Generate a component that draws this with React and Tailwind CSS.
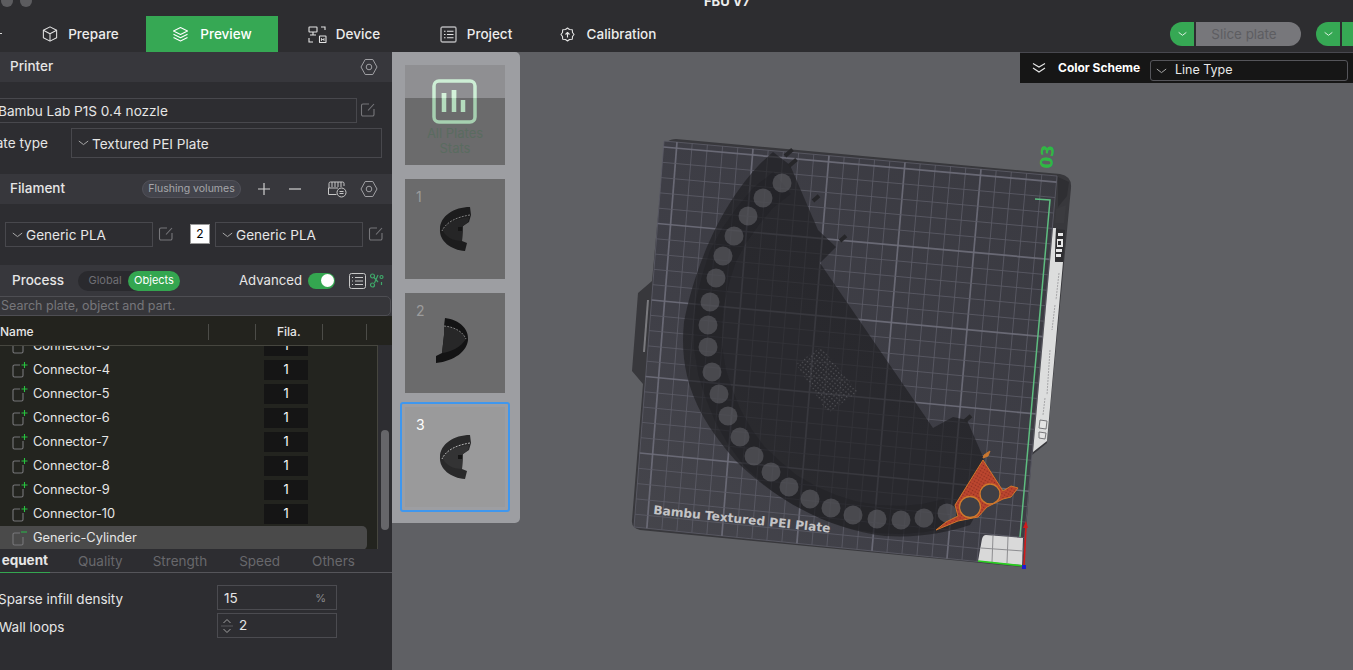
import React from "react";

const FONT = "font-['Inter','Noto_Sans',sans-serif]";

const Gear = ({ className = "" }) => (
  <svg width="18" height="18" viewBox="0 0 18 18" fill="none" stroke="#a0a0a4" strokeWidth="1" className={className}>
    <path d="M5.200 1.500h7.600L17 9l-4.200 7.500H5.200L1 9z" strokeLinejoin="round" />
    <circle cx="9" cy="9" r="2.800" />
  </svg>
);

const Edit = ({ className = "" }) => (
  <svg width="16" height="16" viewBox="0 0 16 16" fill="none" stroke="#77777b" strokeWidth="1.100" className={className}>
    <path d="M9 2H3a1.500 1.500 0 0 0-1.500 1.500v9A1.500 1.500 0 0 0 3 14h9.500a1.500 1.500 0 0 0 1.500-1.500V7" />
    <path d="M8 8.500 14 2" />
  </svg>
);

const Chevron = ({ color = "#a8a8a8", w = 11 }) => (
  <svg width={w} height="6" viewBox="0 0 11 6" fill="none" stroke={color} strokeWidth="1" className="shrink-0">
    <path d="M.8 1 5.500 4.600 10.200 1" />
  </svg>
);

const PartIcon = ({ minus }) => (
  <svg width="16" height="18" viewBox="0 0 16 18" fill="none" className="shrink-0">
    <path d="M8 4H2.500A1.500 1.500 0 0 0 1 5.500v9A1.500 1.500 0 0 0 2.500 16h7a1.500 1.500 0 0 0 1.500-1.500V8" stroke="#77777a" strokeWidth="1.100" />
    {minus ? (
      <path d="M9 3h6" stroke="#2ea84a" strokeWidth="1.200" />
    ) : (
      <path d="M9.500 4h6M12.500 1v6" stroke="#27c33f" strokeWidth="1.100" />
    )}
  </svg>
);

const Tab = ({ icon, label, active, gap }) => (
  <div className={`w-[132px] h-9 flex items-center justify-center text-[13.5px] font-medium ${gap} ${active ? "bg-[#36a854] text-white" : "text-[#ececec]"}`}>
    {icon}
    <span>{label}</span>
  </div>
);

const IconCube = (
  <svg width="18" height="18" viewBox="0 0 19 19" fill="none" stroke="#e4e4e4" strokeWidth="1.100" strokeLinejoin="round">
    <path d="M9.500 2 16.500 5.600v7.800L9.500 17 2.500 13.400V5.600z" />
    <path d="M2.500 5.600 9.500 9.200 16.500 5.600M9.500 9.200V17" />
  </svg>
);
const IconLayers = (
  <svg width="17" height="17" viewBox="0 0 17 17" fill="none" stroke="#ffffff" strokeWidth="1.100" strokeLinejoin="round">
    <path d="M8.500 1.500 15.500 5 8.500 8.500 1.500 5z" />
    <path d="M1.500 8.300 8.500 11.800 15.500 8.300M1.500 11.500 8.500 15 15.500 11.500" />
  </svg>
);
const IconDevice = (
  <svg width="19" height="17" viewBox="0 0 19 17" fill="none" stroke="#e4e4e4" strokeWidth="1.100">
    <rect x="1" y="1" width="8" height="5" rx=".5" />
    <path d="M5 6v3M2 9h6M13 1h4v3M1 12v4h4" />
    <rect x="11.500" y="10" width="6.500" height="6.500" rx=".5" />
    <path d="M13.500 12v3M16 12v3M13.500 13.500H16" strokeWidth=".8" />
  </svg>
);
const IconProject = (
  <svg width="17" height="17" viewBox="0 0 17 17" fill="none" stroke="#b4b4b6" strokeWidth="1.400">
    <rect x="1" y="1" width="15" height="15" rx="1.500" />
    <path d="M4 5.200h1.500M7 5.200h6.500M4 8.500h1.500M7 8.500h6.500M4 11.800h1.500M7 11.800h6.500" stroke="#e4e4e4" strokeWidth="1.100" />
  </svg>
);
const IconCalib = (
  <svg width="15" height="15" viewBox="0 0 15 15" fill="none" stroke="#e4e4e4" strokeWidth="1.100" strokeLinejoin="round">
    <path d="M7.500 1 9.500 2.500 12.300 2.700 12.500 5.500 14 7.500 12.500 9.500 12.300 12.300 9.500 12.500 7.500 14 5.500 12.500 2.700 12.300 2.500 9.500 1 7.500 2.500 5.500 2.700 2.700 5.500 2.500z" />
    <path d="M7.500 10.500V5.500M5.500 7.500l2-2 2 2" />
  </svg>
);

const Head = ({ children, className = "" }) => (
  <div className={`bg-[#37373c] flex items-center ${className}`}>{children}</div>
);

const rows = ["Connector-3", "Connector-4", "Connector-5", "Connector-6", "Connector-7", "Connector-8", "Connector-9", "Connector-10"];

function Sidebar() {
  return (
    <aside className="w-[392px] shrink-0 h-[618px] bg-[#2d2d31] overflow-hidden text-[#e6e6e6]">
      <Head className="h-[30px] pl-[10px] pr-[14px] justify-between text-[13.5px] font-medium">
        <span className="mb-[1px]">Printer</span>
        <Gear />
      </Head>
      <div className="h-[92px] pt-[16px]">
        <div className="flex items-center h-[24px]">
          <div className="ml-[-10px] w-[367px] h-[25px] border border-[#48484d] flex items-center pl-[7px] pt-[2px] text-[13.6px] whitespace-nowrap">Bambu Lab P1S 0.4 nozzle</div>
          <Edit className="ml-[3px]" />
        </div>
        <div className="flex items-center mt-[6px] h-[30px]">
          <div className="w-[71px] shrink-0 flex justify-end pr-[23px] text-[13.6px] whitespace-nowrap">Plate type</div>
          <div className="w-[311px] h-[30px] border border-[#48484d] flex items-center pl-[6px] gap-[3px] text-[13.6px]">
            <Chevron />
            <span className="pt-[2px]">Textured PEI Plate</span>
          </div>
        </div>
      </div>
      <Head className="h-[30px] pl-[10px] pr-[14px] text-[13.5px] font-medium">
        <span className="w-[57px] mb-[1px]">Filament</span>
        <span className="ml-[75px] w-[99px] h-[18px] rounded-full bg-[#43444c] border border-[#515159] text-[10.5px] font-normal text-[#a6a6aa] flex items-center justify-center whitespace-nowrap">Flushing volumes</span>
        <svg width="14" height="14" viewBox="0 0 14 14" stroke="#d0d0d0" strokeWidth="1.200" className="ml-[16px]"><path d="M1 7h12M7 1v12" /></svg>
        <svg width="14" height="14" viewBox="0 0 14 14" stroke="#d0d0d0" strokeWidth="1.200" className="ml-[17px]"><path d="M1 7h12" /></svg>
        <svg width="20" height="18" viewBox="0 0 20 18" fill="none" stroke="#c6c6c6" strokeWidth="1" className="ml-[25px]">
          <path d="M2 8V3.500a1.500 1.500 0 0 1 1.500-1.500h12A1.500 1.500 0 0 1 17 3.500V6M5 2v5M8 2v5M11 2v5M14 2v5M1.500 8H11M1.500 8v6.500h8" />
          <circle cx="14.500" cy="12.500" r="4.500" />
          <path d="M12.500 11.500h4M12.500 13.500h4" />
        </svg>
        <Gear className="ml-[13px]" />
      </Head>
      <div className="h-[61px] pt-[18px] flex items-start text-[13.6px]">
        <div className="ml-[5px] w-[148px] h-[25px] border border-[#48484d] flex items-center pl-[6px] gap-[3px]">
          <Chevron />
          <span className="pt-[1px]">Generic PLA</span>
        </div>
        <Edit className="ml-[5px] mt-[4px]" />
        <div className="ml-[16px] mt-[2px] w-[20px] h-[20px] bg-white border border-[#999] text-black text-[12px] flex items-center justify-center">2</div>
        <div className="ml-[5px] w-[148px] h-[25px] border border-[#48484d] flex items-center pl-[6px] gap-[3px]">
          <Chevron />
          <span className="pt-[1px]">Generic PLA</span>
        </div>
        <Edit className="ml-[5px] mt-[4px]" />
      </div>
      <Head className="h-[31px] pl-[12px] text-[13.5px] font-medium">
        <span className="w-[52px]">Process</span>
        <div className="ml-[14px] w-[102px] h-[20px] rounded-full bg-[#2a2a2e] flex items-center text-[11px] font-normal">
          <span className="w-[50px] pl-[4px] text-center text-[#6f6f74]">Global</span>
          <span className="w-[52px] h-[20px] rounded-full bg-[#34a650] text-white flex items-center justify-center">Objects</span>
        </div>
        <span className="ml-[59px] w-[63px] text-[13.2px] font-normal whitespace-nowrap">Advanced</span>
        <div className="ml-[6px] w-[27px] h-[16px] rounded-full bg-[#34a650] flex items-center justify-end pr-[1px]">
          <div className="w-[13px] h-[13px] rounded-full bg-white" />
        </div>
        <svg width="17" height="16" viewBox="0 0 17 16" fill="none" stroke="#c8c8c8" strokeWidth="1" className="ml-[14px]">
          <rect x=".5" y=".5" width="16" height="15" rx="2" />
          <path d="M3 4.500h1M6 4.500h8M3 8h1M6 8h8M3 11.500h1M6 11.500h8" />
        </svg>
        <svg width="15" height="15" viewBox="0 0 15 15" fill="none" stroke="#3fa86a" strokeWidth="1.200" className="ml-[3px]">
          <circle cx="3.500" cy="3" r="2" />
          <circle cx="3.500" cy="12" r="2" />
          <circle cx="12.500" cy="4" r="1.500" />
          <path d="M5 4.500 9 9M9 2 5.500 10M12.500 9v3" />
        </svg>
      </Head>
      <div className="bg-[#37373c] h-[20px]">
        <div className="ml-[-6px] w-[397px] h-[20px] rounded-[5px] border border-[#4e4e53] bg-[#36363a] flex items-center pl-[6px] pt-[1px] text-[12.5px] text-[#77777b] overflow-hidden">Search plate, object and part.</div>
      </div>
      <div className="h-[29px] pt-[2px] bg-[#23231e] flex items-center text-[12px] font-medium">
        <span className="w-[33px]">Name</span>
        <div className="ml-[175px] w-px h-[16px] bg-[#4c4c48]" />
        <div className="ml-[46px] w-px h-[16px] bg-[#4c4c48]" />
        <span className="ml-[21px] w-[25px] text-[#e6e6e6]">Fila.</span>
        <div className="ml-[20px] w-px h-[16px] bg-[#4c4c48]" />
        <div className="ml-[43px] w-px h-[16px] bg-[#4c4c48]" />
      </div>
      <div className="flex h-[204px]">
        <div className="w-[378px] h-[204px] bg-[#23241f] border-r border-t border-[#46463f] overflow-hidden">
          <div className="mt-[-12px]">
            {rows.map((r) => (
              <div key={r} className="h-[24px] flex items-center pl-[12px] text-[12.8px]">
                <PartIcon />
                <span className="ml-[5px] w-[231px]">{r}</span>
                <div className="w-[44px] h-[20px] bg-[#151515] text-white flex items-center justify-center">1</div>
              </div>
            ))}
            <div className="h-[24px] ml-[-8px] mr-[10px] rounded-[5px] bg-[#4a4a4a] flex items-center pl-[20px] text-[12.8px]">
              <PartIcon minus />
              <span className="ml-[5px]">Generic-Cylinder</span>
            </div>
          </div>
        </div>
        <div className="flex-1 pl-[3px] pt-[85px]">
          <div className="w-[8px] h-[100px] rounded-full bg-[#66666a]" />
        </div>
      </div>
      <div className="h-[24px] flex items-stretch border-b border-[#55555a] text-[13.5px] text-[#68686c]">
        <div className="w-[50px] overflow-hidden border-b-[1.5px] border-[#34a650] mb-[-1px] flex justify-end items-center pr-[2px]">
          <span className="font-bold text-[#e6e6e6]">equent</span>
        </div>
        <span className="ml-[28px] pt-[2px] flex items-center">Quality</span>
        <span className="ml-[30px] pt-[2px] flex items-center">Strength</span>
        <span className="ml-[32px] pt-[2px] flex items-center">Speed</span>
        <span className="ml-[32px] pt-[2px] flex items-center">Others</span>
      </div>
      <div className="pt-[12px] text-[13.5px]">
        <div className="flex items-center h-[25px]">
          <span className="ml-[-2px] w-[219px] pt-[3px]">Sparse infill density</span>
          <div className="w-[120px] h-[25px] border border-[#4b4b50] flex items-center justify-between px-[6px]">
            <span className="pt-[1px]">15</span>
            <span className="text-[#8a8a8e] text-[11px] pr-[4px] pt-[2px]">%</span>
          </div>
        </div>
        <div className="flex items-center h-[25px] mt-[3px]">
          <span className="ml-[-1px] w-[218px] pt-[3px]">Wall loops</span>
          <div className="w-[120px] h-[25px] border border-[#4b4b50] flex items-center pl-[3px] gap-[6px]">
            <svg width="12" height="18" viewBox="0 0 12 18" fill="none" stroke="#a0a0a0" strokeWidth="1">
              <path d="M2.500 6 6 2.500 9.500 6" />
              <path d="M0 9h12" stroke="#58585c" />
              <path d="M2.500 12 6 15.500 9.500 12" />
            </svg>
            <span>2</span>
          </div>
        </div>
      </div>
    </aside>
  );
}

/* ---------- thumbnails ---------- */
const BlobA = ({ fill = "#1c1c1d", face = "#252526", edge = "#8b8b8b" }) => (
  <svg width="100" height="100" viewBox="0 0 100 100" className="absolute left-0 top-0">
    <path d="M65 28 66 36 64 43 58 47 57 62 62 64 60 72C46 71 34 62 35 50 35 37 49 28 65 28Z" fill={fill} />
    <path d="M64 38C50 40 40 44 38 52 41 58 48 62 57 62L58 47 63 43Z" fill={face} />
    <path d="M65 36C52 38 41 43 37 52" stroke={edge} strokeWidth=".9" strokeDasharray="2 1.200" fill="none" />
    <rect x="53" y="48" width="4" height="4" fill="#151515" />
  </svg>
);
const BlobB = () => (
  <svg width="100" height="100" viewBox="0 0 100 100" className="absolute left-0 top-0">
    <path d="M40 25C55 27 64 36 63 47 62 58 50 68 31 70L31 63 37 60 39 42 39 33Z" fill="#131314" />
    <path d="M39 33C50 34 58 39 61 46 56 54 46 59 37 60L39 42Z" fill="#272728" />
    <path d="M39 33C50 34 58 39 61 46" stroke="#8b8b8b" strokeWidth=".9" strokeDasharray="2 1.200" fill="none" />
  </svg>
);

const Thumb = ({ n, active, children }) => (
  <div className={`w-[100px] h-[100px] relative ${active ? "bg-[#9a9a9b]" : "bg-[#6b6b6c]"}`}>
    {children}
    <span className={`absolute left-[11px] top-[7px] text-[14px] ${active ? "text-white" : "text-[#9c9c9c]"}`}>{n}</span>
  </div>
);

function Thumbs() {
  return (
    <div className="absolute left-0 top-0 w-[128px] h-[471px] bg-[#9d9ea2] rounded-r-[5px] pl-[13px] pt-[13px]">
      <div className="w-[100px] h-[100px] relative overflow-hidden bg-[#6b6b6c] flex flex-col items-center">
        <div className="absolute left-0 top-0 w-full h-[33px] bg-[#8f8f92]" />
        <svg width="46" height="46" viewBox="0 0 46 46" fill="none" className="relative mt-[14px] shrink-0">
          <rect x="2" y="2" width="41" height="41" rx="5" stroke="#a6cfb0" strokeWidth="3.500" />
          <path d="M0 0h46v19H0z" fill="#8f8f92" />
          <path d="M2 19V7a5 5 0 0 1 5-5h31a5 5 0 0 1 5 5v12" stroke="#cdeed5" strokeWidth="3.500" />
          <path d="M12 14v19M22 11v22M31 21v12" stroke="#b4dcbd" strokeWidth="4.500" />
          <path d="M12 14v5M22 11v8" stroke="#d4f2da" strokeWidth="4.500" />
        </svg>
        <div className="relative text-[13px] leading-[15px] text-[#5a6b60] text-center mt-[1px] whitespace-nowrap">All Plates<br />Stats</div>
      </div>
      <div className="mt-[14px]">
        <Thumb n="1"><BlobA /></Thumb>
      </div>
      <div className="mt-[14px]">
        <Thumb n="2"><BlobB /></Thumb>
      </div>
      <div className="mt-[9px] ml-[-5px] w-[110px] h-[110px] border-[2px] border-[#3f97ee] rounded-[3px] flex items-center justify-center">
        <Thumb n="3" active><BlobA fill="#29292a" face="#333334" edge="#c6c6c6" /></Thumb>
      </div>
    </div>
  );
}

/* ---------- the 3D bed, drawn in screen coordinates of the canvas ---------- */
const OX = 392, OY = 52;
const Q = { tl: [664, 141], tr: [1057, 176], br: [1022, 566], bl: [634, 527] };
const map = (u, v) => {
  const a = Q.tl[0] + (Q.tr[0] - Q.tl[0]) * u, b = Q.tl[1] + (Q.tr[1] - Q.tl[1]) * u;
  const c = Q.bl[0] + (Q.br[0] - Q.bl[0]) * u, d = Q.bl[1] + (Q.br[1] - Q.bl[1]) * u;
  return [a + (c - a) * v, b + (d - b) * v];
};
const gridLines = [];
const addV = (t, major, k) => {
  const [x1, y1] = map(t, 0), [x2, y2] = map(t, 1);
  gridLines.push({ k, x1, y1, x2, y2, major });
};
const addH = (t, major, k) => {
  const [x1, y1] = map(0, t), [x2, y2] = map(1, t);
  gridLines.push({ k, x1, y1, x2, y2, major });
};
addV(0, false, "v-a");
addV(1, false, "v-b");
addH(0, false, "h-a");
addH(1, false, "h-b");
for (let i = 0; 13 + 15.2 * i < 393; i++) addV((13 + 15.2 * i) / 393, i % 5 === 0, "v" + i);
for (let i = 0; 6 + 15.3 * i < 386; i++) addH((6 + 15.3 * i) / 386, i % 5 === 0, "h" + i);

const holes = [
  [782, 183], [763, 198], [748, 216], [734, 236], [723, 256], [716, 278], [710, 302], [708, 325], [708, 347],
  [712, 372], [719, 394], [728, 416], [740, 437], [754, 456], [771, 472], [789, 487], [810, 499], [831, 508],
  [853, 515], [877, 519], [901, 520], [924, 518], [947, 513],
];
const ringPoints = holes.map((p) => p.join(",")).join(" ");

const pegs = [[785, 156, 10], [789, 166, 10], [813, 201, 8], [840, 241, 8], [965, 421, 8]];

const PART = "M773 152C730 188 697 255 684 322 678 380 700 420 735 460 775 500 830 530 885 536 920 538 945 533 970 525L990 490 983 457 967 420 953 417 933 428 820 263 836 247 818 230 790 165Z";

function Bed() {
  return (
    <svg width="961" height="618" viewBox={`${OX} ${OY} 961 618`} className="absolute left-0 top-0" fill="none">
      <defs>
        <linearGradient id="plate" x1="0" y1="1" x2="1" y2="0">
          <stop offset="0" stopColor="#46464c" />
          <stop offset=".35" stopColor="#3f3f47" />
          <stop offset="1" stopColor="#3a3a41" />
        </linearGradient>
        <pattern id="dots" width="3.500" height="3.500" patternUnits="userSpaceOnUse" patternTransform="rotate(38)">
          <circle cx="1.500" cy="1.500" r=".7" fill="#5a5a5e" />
        </pattern>
        <pattern id="weave" width="3" height="3" patternUnits="userSpaceOnUse" patternTransform="rotate(30)">
          <rect width="3" height="3" fill="#bc462f" />
          <circle cx="1.500" cy="1.500" r=".8" fill="#8f2f20" />
        </pattern>
        <clipPath id="partClip">
          <path d={PART} />
        </clipPath>
      </defs>

      {/* outer frame */}
      <path d="M676 139 1060 174Q1072 176 1071 188L1047 443 1032 455 1023 567 640 530Q631 528 632 520L643 384 632 371 638 293 652 281 664 150Q665 139 676 139Z" fill="#38383c" />
      <path d="M664 141 1057 176 1022 566 634 527Z" fill="url(#plate)" />
      <path d="M648 300 644 352" stroke="#7a7a7e" strokeWidth="2" />

      {/* grid */}
      {gridLines.map((l) => (
        <line key={l.k} x1={l.x1} y1={l.y1} x2={l.x2} y2={l.y2} stroke={l.major ? "#6e6e7a" : "#5c5c66"} strokeOpacity={l.major ? 0.9 : 0.85} strokeWidth={l.major ? 1.700 : 1} />
      ))}

      {/* the part lies over the grid, which shows through it */}
      <path d={PART} fill="#1f1f22" fillOpacity=".66" />
      <g clipPath="url(#partClip)">
        <polyline points={ringPoints} stroke="#17171a" strokeOpacity=".22" strokeWidth="28" strokeLinejoin="round" />
      </g>
      {pegs.map(([x, y, l], i) => (
        <line key={i} x1={x} y1={y} x2={x + l * 0.75} y2={y - l * 0.65} stroke="#27272a" strokeWidth="4" />
      ))}
      {holes.map(([x, y], i) => (
        <circle key={i} cx={x} cy={y} r="9.500" fill="#6e6e74" fillOpacity=".5" />
      ))}

      <path d="M796 364 821 347 858 392 828 413Z" fill="url(#dots)" />

      {/* sliced layer */}
      <path d="M983 460 1003 491 1011 486 1018 488 1011 497 1003 499 987 507 978 517 958 521 936 530 946 522 958 516 955 505Z" fill="url(#weave)" stroke="#d2772a" strokeWidth="1" strokeLinejoin="round" />
      <path d="M983 458 984 455 990 451 988 456Z" fill="#c9772f" stroke="#c9772f" />
      <circle cx="990" cy="494" r="10" fill="#3f3f45" stroke="#cf7a2c" strokeWidth="1.300" />
      <circle cx="970" cy="507" r="10.500" fill="#3f3f45" stroke="#cf7a2c" strokeWidth="1.300" />

      {/* right strip and logos */}
      <path d="M1053 228 1056 228 1055 262 1063 262 1047 441 1033 452Z" fill="#dcdddd" />
      <path d="M1056 229 1065 230 1063 262 1055 261Z" fill="#2e2e31" />
      <path d="M1058 233h5v3h-5zM1057 239h6v8h-6zM1056 249h6v3h-6zM1056 254h5v3h-5z" fill="#e8e8e8" />
      <path d="M1058 241h3v4h-3z" fill="#2e2e31" />
      <path d="M1058 177 1069 182 1067 196 1058 207Z" fill="#2f2f33" />
      <path d="M1056 209 1066 205 1064 223 1055 223Z" fill="#3b3b3f" />
      <path d="M1059 273 1056 300M1055 305 1052 330M1050 350 1047 395M1045 398 1043 415" stroke="#a6a6a8" strokeWidth="1" strokeDasharray="2 1" />
      <path d="M1040 420 1047 421 1046 429 1039 428ZM1039 432 1046 433 1045 439 1039 438Z" stroke="#77777a" strokeWidth="1" fill="#e4e4e4" />

      {/* excluded corner, origin, axes */}
      <path d="M986 535 1023 538 1022 565 978 561 982 539Q983 535 986 535Z" fill="#d9d9d9" />
      <path d="M993 536 992 562M1008 537 1007 563M981 548 1023 551" stroke="#8d8d90" strokeWidth="1" />
      <path d="M1035 199 1050 200 1020 537" stroke="#5ebd80" strokeWidth="1.500" />
      <path d="M978 561 1024 566" stroke="#27cf1d" strokeWidth="1.600" />
      <path d="M1024 566 1026 526" stroke="#d21a1a" strokeWidth="1.600" />
      <path d="M1023 528 1026 521 1028 528Z" fill="#d21a1a" />
      <rect x="1022" y="565" width="4" height="4" fill="#1d1dd0" />

      <text x="1052" y="169" transform="rotate(-85 1052 169)" fontFamily="'DejaVu Sans',sans-serif" fontSize="17" fontWeight="700" fill="#2fb844">03</text>
      <text x="653" y="514" transform="rotate(6 653 514)" fontFamily="'DejaVu Sans',sans-serif" fontSize="12.200" fontWeight="700" fill="#c4c4c6">Bambu Textured PEI Plate</text>
    </svg>
  );
}

export default function App() {
  return (
    <div className={`w-[1353px] h-[670px] overflow-hidden bg-[#2d2d30] ${FONT}`}>
      <header className="h-[52px]">
        <div className="h-[16px] overflow-hidden relative">
          <div className="absolute left-[1px] top-[-5px] w-[12px] h-[12px] rounded-full bg-[#5c5c5f]" />
          <div className="absolute left-[20px] top-[-5px] w-[12px] h-[12px] rounded-full bg-[#5c5c5f]" />
          <div className="absolute left-0 right-0 top-[-6px] text-center pl-[101px] text-[13px] leading-[14px] font-bold text-[#ececec]">FBU V7</div>
        </div>
        <div className="flex h-[36px]">
          <div className="w-[14px] relative">
            <div className="absolute left-0 top-[17px] w-[2px] h-px bg-[#d8d8d8]" />
          </div>
          <Tab icon={IconCube} label="Prepare" gap="gap-[9px]" />
          <Tab icon={IconLayers} label="Preview" gap="gap-[11px]" active />
          <Tab icon={IconDevice} label="Device" gap="gap-[9px]" />
          <Tab icon={IconProject} label="Project" gap="gap-[10px]" />
          <Tab icon={IconCalib} label="Calibration" gap="gap-[12px]" />
          <div className="ml-auto flex items-center self-stretch">
            <div className="w-[24px] h-[24px] bg-[#36a854] rounded-l-full flex items-center justify-center"><Chevron color="#fff" w={9} /></div>
            <div className="ml-[2px] w-[105px] h-[24px] pr-[9px] bg-[#77777b] rounded-r-full flex items-center justify-center text-[13.4px] text-[#5d5d61]">Slice plate</div>
            <div className="ml-[15px] w-[24px] h-[24px] bg-[#36a854] rounded-l-full flex items-center justify-center"><Chevron color="#fff" w={9} /></div>
            <div className="ml-[2px] w-[11px] h-[24px] bg-[#36a854]" />
          </div>
        </div>
      </header>
      <div className="flex h-[618px]">
        <Sidebar />
        <main className="relative flex-1 bg-[#5f6064] overflow-hidden">
          <Bed />
          <Thumbs />
          <div className="absolute right-0 top-0 w-[333px] h-[31px] bg-[#161616] border-t border-[#48484f] flex items-center text-[12px] text-white">
            <svg width="14" height="12" viewBox="0 0 14 12" fill="none" stroke="#e8e8e8" strokeWidth="1.100" className="ml-[12px]">
              <path d="M1 1.500 7 5 13 1.500M1 6 7 10 13 6" />
            </svg>
            <span className="ml-[12px] font-bold w-[92px] whitespace-nowrap">Color Scheme</span>
            <div className="w-[198px] h-[21px] mt-[5px] rounded-[3px] border border-[#55555a] flex items-center pl-[5px] gap-[8px] text-[12.5px] text-[#e8e8e8]">
              <Chevron />
              <span>Line Type</span>
            </div>
          </div>
        </main>
      </div>
    </div>
  );
}
